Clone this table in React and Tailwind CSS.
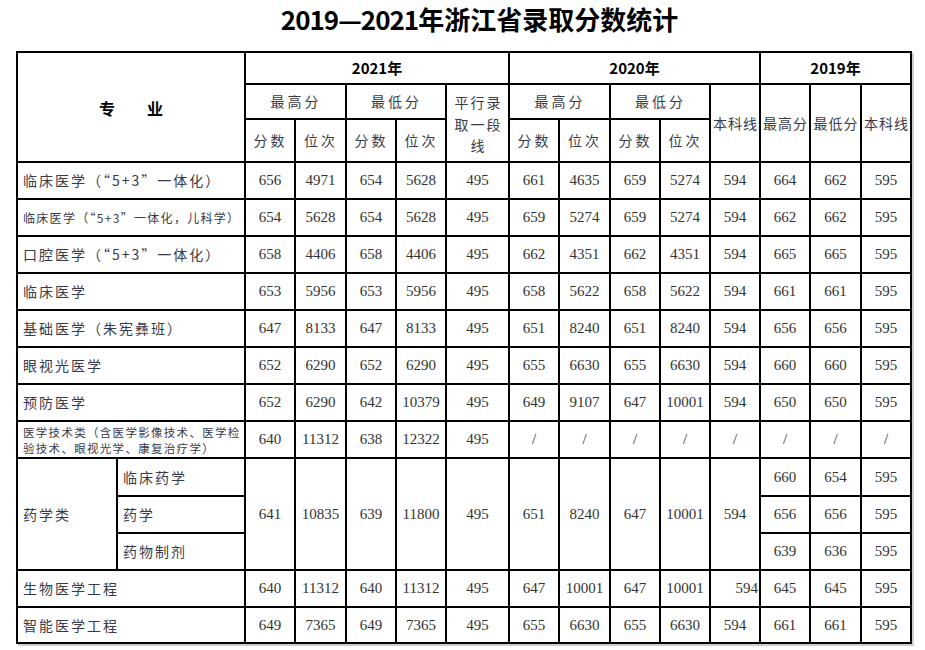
import React from "react"

const cjk = "font-['Noto_Sans_CJK_SC',sans-serif]"
const serif = "font-['Liberation_Serif','Noto_Sans_CJK_SC',serif]"

const rows = [
  { name: "临床医学（“5+3”一体化）", v: [656, 4971, 654, 5628, 495, 661, 4635, 659, 5274, 594, 664, 662, 595] },
  { name: "临床医学（“5+3”一体化，儿科学）", small: true, v: [654, 5628, 654, 5628, 495, 659, 5274, 659, 5274, 594, 662, 662, 595] },
  { name: "口腔医学（“5+3”一体化）", v: [658, 4406, 658, 4406, 495, 662, 4351, 662, 4351, 594, 665, 665, 595] },
  { name: "临床医学", v: [653, 5956, 653, 5956, 495, 658, 5622, 658, 5622, 594, 661, 661, 595] },
  { name: "基础医学（朱宪彝班）", v: [647, 8133, 647, 8133, 495, 651, 8240, 651, 8240, 594, 656, 656, 595] },
  { name: "眼视光医学", v: [652, 6290, 652, 6290, 495, 655, 6630, 655, 6630, 594, 660, 660, 595] },
  { name: "预防医学", v: [652, 6290, 642, 10379, 495, 649, 9107, 647, 10001, 594, 650, 650, 595] },
]

const Cell = ({ className = "", children }) => (
  <div className={`bg-white flex items-center justify-center ${className}`}>{children}</div>
)

const Num = ({ children, className = "" }) => (
  <Cell className={`${serif} text-[15px] text-[#333] ${className}`}>{children}</Cell>
)

const Head = ({ children, className = "" }) => (
  <Cell className={`${cjk} text-[14px] tracking-[1px] text-[#3a3a48] ${className}`}>
    <span className="mr-[-1px]">{children}</span>
  </Cell>
)

const Name = ({ children, className = "" }) => (
  <Cell className={`col-span-2 justify-start pl-[5px] ${cjk} text-[#3a3a48] ${className}`}>{children}</Cell>
)

const Year = ({ children, className = "" }) => (
  <Cell className={`${cjk} font-bold text-[15px] text-black ${className}`}>{children}</Cell>
)

export default function App() {
  return (
    <div className="w-[925px] h-[650px] bg-white overflow-hidden">
      <div className={`h-[51px] pl-[34px] text-center ${cjk} font-bold text-[26px] leading-[38px] text-black`}>
        <span className="tracking-[-1px]">2019—2021</span>年浙江省录取分数统计
      </div>

      <div className="ml-[16px] w-[896px] bg-black p-[2px] gap-[2px] grid grid-cols-[98px_126px_48px_49px_48px_48px_61px_48px_49px_48px_48px_48px_48px_49px_48px] grid-rows-[30px_33px_41px_35px_35px_35px_35px_35px_35px_35px_35px_36px_35px_35px_35px_34px] shadow-[2px_2px_0_#cfcfcf]">
        {/* header row 1 */}
        <Cell className={`col-span-2 row-span-3 ${cjk} font-bold text-[16px] text-black gap-[32px] pt-[2px]`}>
          <span>专</span>
          <span>业</span>
        </Cell>
        <Year className="col-span-5">2021年</Year>
        <Year className="col-span-5">2020年</Year>
        <Year className="col-span-3">2019年</Year>

        {/* header row 2 */}
        <Head className="col-span-2 tracking-[3px]">最高分</Head>
        <Head className="col-span-2 tracking-[3px]">最低分</Head>
        <Cell className={`row-span-2 ${cjk} text-[14px] tracking-[2px] leading-[21.5px] text-[#3a3a48] text-center pt-[3px]`}>
          <span className="mr-[-2px]">
            平行录
            <br />
            取一段
            <br />
            线
          </span>
        </Cell>
        <Head className="col-span-2 tracking-[3px]">最高分</Head>
        <Head className="col-span-2 tracking-[3px]">最低分</Head>
        <Head className="row-span-2 tracking-[0.5px]">本科线</Head>
        <Head className="row-span-2 tracking-[0.5px]">最高分</Head>
        <Head className="row-span-2 tracking-[0.5px]">最低分</Head>
        <Head className="row-span-2 tracking-[0.5px]">本科线</Head>

        {/* header row 3 */}
        <Head className="tracking-[3px]">分数</Head>
        <Head className="tracking-[3px]">位次</Head>
        <Head className="tracking-[3px]">分数</Head>
        <Head className="tracking-[3px]">位次</Head>
        <Head className="tracking-[3px]">分数</Head>
        <Head className="tracking-[3px]">位次</Head>
        <Head className="tracking-[3px]">分数</Head>
        <Head className="tracking-[3px]">位次</Head>

        {/* data rows */}
        {rows.map((r) => (
          <React.Fragment key={r.name}>
            <Name className={r.small ? "text-[12px] tracking-[1.3px]" : "text-[14px] tracking-[2px]"}>{r.name}</Name>
            {r.v.map((n, i) => (
              <Num key={i}>{n}</Num>
            ))}
          </React.Fragment>
        ))}

        {/* 医学技术类 */}
        <Name className="text-[11.5px] tracking-[1.3px] leading-[16px]">
          <span>
            医学技术类（含医学影像技术、医学检
            <br />
            验技术、眼视光学、康复治疗学）
          </span>
        </Name>
        <Num>640</Num>
        <Num>11312</Num>
        <Num>638</Num>
        <Num>12322</Num>
        <Num>495</Num>
        <Num>/</Num>
        <Num>/</Num>
        <Num>/</Num>
        <Num>/</Num>
        <Num>/</Num>
        <Num>/</Num>
        <Num>/</Num>
        <Num>/</Num>

        {/* 药学类 */}
        <Cell className={`row-span-3 justify-start pl-[5px] ${cjk} text-[14px] tracking-[2px] text-[#3a3a48]`}>药学类</Cell>
        <Cell className={`justify-start pl-[5px] ${cjk} text-[14px] tracking-[2px] text-[#3a3a48]`}>临床药学</Cell>
        <Num className="row-span-3">641</Num>
        <Num className="row-span-3">10835</Num>
        <Num className="row-span-3">639</Num>
        <Num className="row-span-3">11800</Num>
        <Num className="row-span-3">495</Num>
        <Num className="row-span-3">651</Num>
        <Num className="row-span-3">8240</Num>
        <Num className="row-span-3">647</Num>
        <Num className="row-span-3">10001</Num>
        <Num className="row-span-3">594</Num>
        <Num>660</Num>
        <Num>654</Num>
        <Num>595</Num>
        <Cell className={`justify-start pl-[5px] ${cjk} text-[14px] tracking-[2px] text-[#3a3a48]`}>药学</Cell>
        <Num>656</Num>
        <Num>656</Num>
        <Num>595</Num>
        <Cell className={`justify-start pl-[5px] ${cjk} text-[14px] tracking-[2px] text-[#3a3a48]`}>药物制剂</Cell>
        <Num>639</Num>
        <Num>636</Num>
        <Num>595</Num>

        {/* 生物医学工程 */}
        <Name className="text-[14px] tracking-[2px]">生物医学工程</Name>
        <Num>640</Num>
        <Num>11312</Num>
        <Num>640</Num>
        <Num>11312</Num>
        <Num>495</Num>
        <Num>647</Num>
        <Num>10001</Num>
        <Num>647</Num>
        <Num>10001</Num>
        <Num className="justify-end pr-[1px]">594</Num>
        <Num>645</Num>
        <Num>645</Num>
        <Num>595</Num>

        {/* 智能医学工程 */}
        <Name className="text-[14px] tracking-[2px]">智能医学工程</Name>
        <Num>649</Num>
        <Num>7365</Num>
        <Num>649</Num>
        <Num>7365</Num>
        <Num>495</Num>
        <Num>655</Num>
        <Num>6630</Num>
        <Num>655</Num>
        <Num>6630</Num>
        <Num>594</Num>
        <Num>661</Num>
        <Num>661</Num>
        <Num>595</Num>
      </div>
    </div>
  )
}
